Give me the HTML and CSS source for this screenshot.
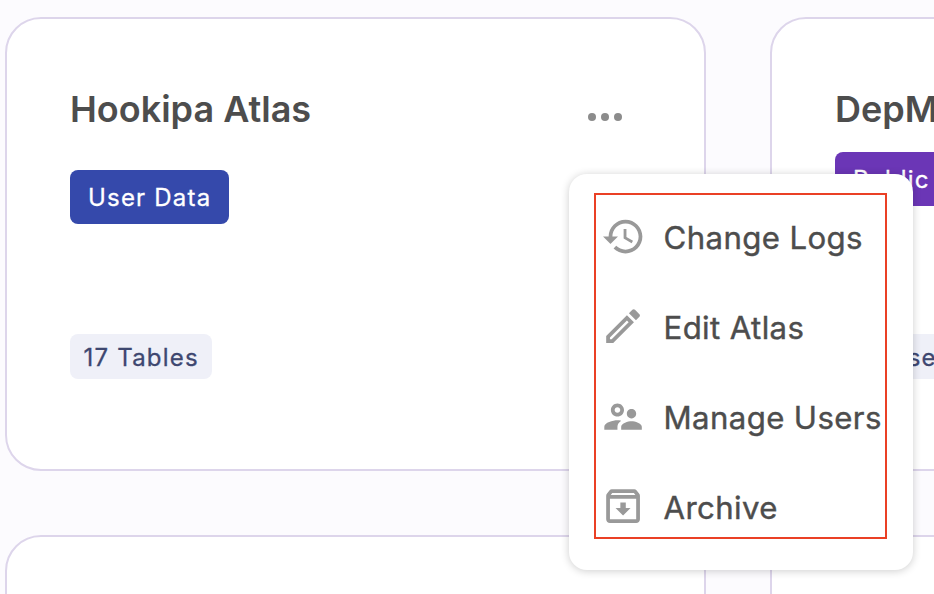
FILE: index.html
```html
<!DOCTYPE html>
<html lang="en">
<head>
<meta charset="utf-8">
<title>Atlases</title>
<link rel="stylesheet" href="styles.css">
</head>
<body>
<main class="grid">
  <article class="card">
    <header class="card-head with-actions">
      <h2 class="title">Hookipa Atlas</h2>
      <button class="more" aria-label="More actions"><i></i><i></i><i></i></button>
    </header>
    <span class="tag user">User Data</span>
    <span class="count">17 Tables</span>
  </article>
  <article class="card">
    <header class="card-head">
      <h2 class="title">DepMap</h2>
    </header>
    <span class="tag public">Public</span>
    <span class="count">24 Users</span>
  </article>
  <article class="card"></article>
  <article class="card"></article>
</main>
<nav class="menu">
  <ul class="menu-list">
    <li class="item">
      <svg class="icon" viewBox="-0.6 0 24 24"><path d="M13 3c-4.97 0-9 4.03-9 9H1l3.89 3.89.07.14L9 12H6c0-3.87 3.13-7 7-7s7 3.13 7 7-3.13 7-7 7c-1.93 0-3.68-.79-4.94-2.06l-1.42 1.42C8.27 19.99 10.51 21 13 21c4.97 0 9-4.03 9-9s-4.03-9-9-9zm-1 5v5l4.28 2.54.72-1.21-3.5-2.08V8H12z"/></svg>
      <span>Change Logs</span>
    </li>
    <li class="item">
      <svg class="icon" viewBox="-0.3 0.2 24 24"><path d="m14.06 9.02.92.92L5.92 19H5v-.92l9.06-9.06M17.66 3c-.25 0-.51.1-.7.29l-1.83 1.83 3.75 3.75 1.83-1.83c.39-.39.39-1.02 0-1.41l-2.34-2.34c-.2-.2-.45-.29-.71-.29zm-3.6 3.19L3 17.25V21h3.75L17.81 9.94l-3.75-3.75z"/></svg>
      <span>Edit Atlas</span>
    </li>
    <li class="item">
      <svg class="icon" viewBox="-0.3 0 24 24"><path d="M9 12c1.93 0 3.5-1.57 3.5-3.5S10.93 5 9 5 5.5 6.57 5.5 8.5 7.07 12 9 12zm0-5c.83 0 1.5.67 1.5 1.5S9.83 10 9 10s-1.5-.67-1.5-1.5S8.17 7 9 7zM9 14c-2.34 0-7 1.17-7 3.5V19h7v-1.5c0-1.45.9-2.55 2.03-3.3C10.3 14.07 9.58 14 9 14zM16.5 14.5c-1.84 0-5.5 1.01-5.5 3V19h11v-1.5c0-1.99-3.66-3-5.5-3zm1.21-1.82c.76-.43 1.29-1.24 1.29-2.18C19 9.12 17.88 8 16.5 8S14 9.12 14 10.5c0 .94.53 1.75 1.29 2.18.36.2.77.32 1.21.32s.85-.12 1.21-.32z"/></svg>
      <span>Manage Users</span>
    </li>
    <li class="item">
      <svg class="icon" viewBox="-0.3 0.2 24 24"><path d="M20.54 5.23l-1.39-1.68C18.88 3.21 18.47 3 18 3H6c-.47 0-.88.21-1.16.55L3.46 5.23C3.17 5.57 3 6.02 3 6.5V19c0 1.1.9 2 2 2h14c1.1 0 2-.9 2-2V6.5c0-.48-.17-.93-.46-1.27zM6.24 5h11.52l.83 1H5.42l.82-1zM5 19V8h14v11H5zm8.45-9h-2.9v3H8l4 4 4-4h-2.55z"/></svg>
      <span>Archive</span>
    </li>
  </ul>
</nav>
</body>
</html>
```

FILE: styles.css
```css
* { box-sizing: border-box; }
html, body { height: 100%; overflow: hidden; }
body {
  margin: 0;
  background: #fcfbfe;
  font-family: Inter, "Liberation Sans", sans-serif;
  color: #4d4d4d;
}
.grid {
  display: grid;
  grid-template-columns: 701px 701px;
  grid-auto-rows: 454px;
  gap: 64px;
  padding: 17px 0 0 5px;
}
.card {
  display: flex;
  flex-direction: column;
  align-items: flex-start;
  padding: 64px 63px 90px;
  background: #fff;
  border: 2px solid #ddd5eb;
  border-radius: 36px;
}
.card-head {
  display: flex;
  justify-content: space-between;
  align-items: flex-start;
  width: 100%;
  height: 54px;
  margin-bottom: 15px;
}
.with-actions { height: 72px; }
.title {
  margin: 0;
  font-size: 36px;
  font-weight: 600;
  line-height: 52px;
}
.more {
  display: flex;
  align-items: center;
  justify-content: center;
  gap: 5px;
  width: 72px;
  height: 68px;
  padding: 0;
  border: 0;
  background: none;
}
.more i {
  width: 8px;
  height: 8px;
  border-radius: 50%;
  background: #8c8c8c;
}
.tag {
  height: 54px;
  padding: 0 18px;
  border-radius: 8px;
  color: #fff;
  font-size: 24px;
  line-height: 56px;
  letter-spacing: 1.2px;
  -webkit-text-stroke: .3px;
}
.user { background: #3549ab; }
.public { background: #6b36b6; }
.count {
  height: 45px;
  margin-top: auto;
  padding: 0 13.5px;
  border-radius: 8px;
  background: #eff0f8;
  color: #3e4770;
  font-size: 24px;
  line-height: 47px;
  letter-spacing: 1.2px;
  -webkit-text-stroke: .3px;
}
.menu {
  position: absolute;
  left: 569px;
  top: 174px;
  width: 344px;
  height: 396px;
  padding: 19px 25px;
  background: #fff;
  border-radius: 18px;
  box-shadow: 0 1px 8px rgba(0, 0, 0, .2);
}
.menu-list {
  width: 293px;
  height: 346px;
  margin: 0;
  padding: 0 0 0 4px;
  border: 2px solid #ea4025;
  list-style: none;
}
.item {
  display: flex;
  align-items: center;
  gap: 18.5px;
  height: 90px;
  font-size: 31.2px;
  letter-spacing: .38px;
  -webkit-text-stroke: .4px;
  white-space: nowrap;
}
.item:first-child { margin-top: -2px; }
.icon {
  flex: none;
  width: 45px;
  height: 45px;
  margin-top: -3.5px;
  fill: #999;
}
```
